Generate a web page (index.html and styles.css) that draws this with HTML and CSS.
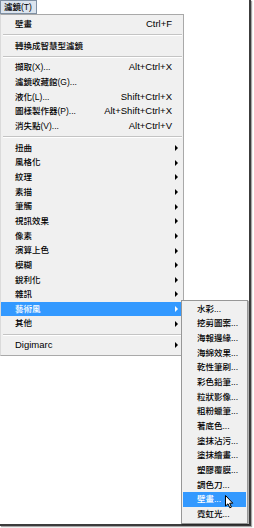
FILE: index.html
```html
<html>
<head>
<title>濾鏡</title>
<link rel="stylesheet" href="styles.css">
</head>
<body>
<div class="shot">
  <div class="bar"><span class="bar-item">濾鏡(T)</span></div>
  <div class="menu">
    <div class="item"><span class="label">壁畫</span><span class="key">Ctrl+F</span></div>
    <div class="sep"></div>
    <div class="item"><span class="label">轉換成智慧型濾鏡</span></div>
    <div class="sep"></div>
    <div class="item"><span class="label">擷取(X)...</span><span class="key">Alt+Ctrl+X</span></div>
    <div class="item"><span class="label">濾鏡收藏館(G)...</span></div>
    <div class="item"><span class="label">液化(L)...</span><span class="key">Shift+Ctrl+X</span></div>
    <div class="item"><span class="label">圖樣製作器(P)...</span><span class="key">Alt+Shift+Ctrl+X</span></div>
    <div class="item"><span class="label">消失點(V)...</span><span class="key">Alt+Ctrl+V</span></div>
    <div class="sep"></div>
    <div class="item"><span class="label">扭曲</span><span class="arrow"></span></div>
    <div class="item"><span class="label">風格化</span><span class="arrow"></span></div>
    <div class="item"><span class="label">紋理</span><span class="arrow"></span></div>
    <div class="item"><span class="label">素描</span><span class="arrow"></span></div>
    <div class="item"><span class="label">筆觸</span><span class="arrow"></span></div>
    <div class="item"><span class="label">視訊效果</span><span class="arrow"></span></div>
    <div class="item"><span class="label">像素</span><span class="arrow"></span></div>
    <div class="item"><span class="label">演算上色</span><span class="arrow"></span></div>
    <div class="item"><span class="label">模糊</span><span class="arrow"></span></div>
    <div class="item"><span class="label">銳利化</span><span class="arrow"></span></div>
    <div class="item"><span class="label">雜訊</span><span class="arrow"></span></div>
    <div class="item open"><span class="label">藝術風</span><span class="arrow"></span>
      <div class="submenu">
        <div class="item"><span class="label">水彩...</span></div>
        <div class="item"><span class="label">挖剪圖案...</span></div>
        <div class="item"><span class="label">海報邊緣...</span></div>
        <div class="item"><span class="label">海綿效果...</span></div>
        <div class="item"><span class="label">乾性筆刷...</span></div>
        <div class="item"><span class="label">彩色鉛筆...</span></div>
        <div class="item"><span class="label">粒狀影像...</span></div>
        <div class="item"><span class="label">粗粉蠟筆...</span></div>
        <div class="item"><span class="label">著底色...</span></div>
        <div class="item"><span class="label">塗抹沾污...</span></div>
        <div class="item"><span class="label">塗抹繪畫...</span></div>
        <div class="item"><span class="label">塑膠覆膜...</span></div>
        <div class="item"><span class="label">調色刀...</span></div>
        <div class="item open"><span class="label">壁畫...</span>
          <svg class="cursor" width="9" height="14" viewBox="0 0 9 14">
            <path d="M0.5 0.5 L0.5 11 L3 8.8 L4.8 12.8 L6.4 12.1 L4.7 8.2 L7.8 8.2 Z" fill="#fff" stroke="#000" stroke-width="1" stroke-linejoin="round"/>
          </svg>
        </div>
        <div class="item"><span class="label">霓虹光...</span></div>
      </div>
    </div>
    <div class="item"><span class="label">其他</span><span class="arrow"></span></div>
    <div class="sep"></div>
    <div class="item"><span class="label latin">Digimarc</span><span class="arrow"></span></div>
  </div>
</div>
</body>
</html>
```

FILE: styles.css
```css
body {
  margin: 0;
  background: #fff;
  font-family: "Liberation Sans", "Noto Sans CJK TC", sans-serif;
  color: #000;
}
.shot {
  position: relative;
  width: 249px;
  height: 524px;
  border-right: 2px solid #3c3c3c;
  border-bottom: 2px solid #3c3c3c;
  box-shadow: 1px 1px 1px rgba(0, 0, 0, 0.35);
  background: #fff;
}
.bar {
  height: 14px;
}
.bar-item {
  display: inline-block;
  box-sizing: border-box;
  width: 37px;
  height: 14px;
  padding-left: 3px;
  border: 1px solid #7f90a3;
  background: #dbe4ee;
  font-size: 8.5px;
  font-weight: 500;
  line-height: 12px;
}
.menu {
  width: 184px;
  box-sizing: border-box;
  background: #f0f0f0;
  border: 1px solid #a9a9a9;
  border-left: 1px solid #dadada;
  padding: 2px 0;
}
.item {
  position: relative;
  display: flex;
  align-items: center;
  height: 14.667px;
  line-height: 14.667px;
  padding: 0 5px 0 14px;
  white-space: nowrap;
}
.label {
  font-size: 8.5px;
  font-weight: 500;
}
.label.latin {
  font-size: 9.5px;
  font-weight: normal;
}
.key {
  margin-left: auto;
  margin-right: 6px;
  font-size: 9.5px;
}
.arrow {
  margin-left: auto;
  width: 0;
  height: 0;
  border-left: 3px solid #000;
  border-top: 3px solid transparent;
  border-bottom: 3px solid transparent;
}
.open {
  background: #3399ff;
  color: #fff;
}
.open > .arrow {
  border-left-color: #fff;
}
.sep {
  height: 7px;
  display: flex;
  align-items: center;
  padding: 0 1px 0 2px;
}
.sep::before {
  content: "";
  flex: 1;
  border-top: 1px solid #c4c4c4;
  border-bottom: 1px solid #fff;
}
.submenu {
  position: absolute;
  left: 180px;
  top: -2px;
  z-index: 2;
  width: 67px;
  box-sizing: border-box;
  background: #f0f0f0;
  border: 1px solid #979797;
  padding: 1px;
  color: #000;
  box-shadow: 1px 1px 1px rgba(0, 0, 0, 0.3);
}
.submenu .item {
  padding-left: 14px;
}
.submenu .open {
  color: #fff;
}
.cursor {
  position: absolute;
  left: 42px;
  top: 3px;
}
```
